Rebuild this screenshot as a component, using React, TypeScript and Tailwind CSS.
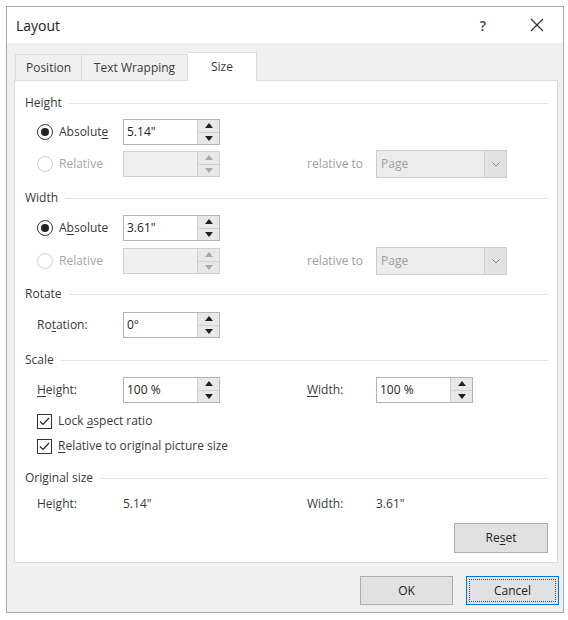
import React from 'react';

// ── Small building blocks ─────────────────────────────────────
const FONT = 'font-["Open_Sans","Noto_Sans",sans-serif]';

function U({ children }: { children: React.ReactNode }) {
  return <span className="underline underline-offset-2">{children}</span>;
}

function SectionHeader({ title, className = '' }: { title: string; className?: string }) {
  return (
    <div className={`flex h-5 items-center pl-[10px] pr-[9px] ${className}`}>
      <span className="text-[12px] text-[#3a3a3a]">{title}</span>
      <div className="ml-[7px] h-px flex-1 bg-[#e3e3e3]" />
    </div>
  );
}

function Spinner({ disabled = false }: { disabled?: boolean }) {
  const fill = disabled ? '#a8a8a8' : '#202020';
  return (
    <div className="flex h-[24px] w-[22px] flex-col border-l border-[#d0d0d0] bg-[#e8e8e8]">
      <div className="flex flex-1 items-center justify-center border-b border-[#d0d0d0]">
        <svg width="8" height="5" viewBox="0 0 8 5">
          <polygon points="0,5 8,5 4,0" fill={fill} />
        </svg>
      </div>
      <div className="flex flex-1 items-center justify-center">
        <svg width="8" height="5" viewBox="0 0 8 5">
          <polygon points="0,0 8,0 4,5" fill={fill} />
        </svg>
      </div>
    </div>
  );
}

function SpinBox({ value = '', disabled = false }: { value?: string; disabled?: boolean }) {
  return (
    <div
      className={`flex h-[26px] w-[97px] items-center border ${
        disabled ? 'border-[#cfcfcf] bg-[#f0f0f0]' : 'border-[#b4b4b4] bg-white'
      }`}
    >
      <span className="flex-1 pl-[3px] text-[12px] text-[#222]">{value}</span>
      <Spinner disabled={disabled} />
    </div>
  );
}

function Radio({ checked = false, disabled = false }: { checked?: boolean; disabled?: boolean }) {
  return (
    <span
      className={`flex h-[16px] w-[16px] items-center justify-center rounded-full border bg-white ${
        disabled ? 'border-[#cfcfcf]' : 'border-[#333]'
      }`}
    >
      {checked && <span className="h-[8px] w-[8px] rounded-full bg-[#222]" />}
    </span>
  );
}

function Checkbox() {
  return (
    <span className="flex h-[15px] w-[15px] items-center justify-center border border-[#333] bg-white">
      <svg width="11" height="9" viewBox="0 0 11 9">
        <polyline points="1,4.5 4,7.5 10,1" fill="none" stroke="#222" strokeWidth="1.2" />
      </svg>
    </span>
  );
}

function Select() {
  return (
    <div className="flex h-[28px] w-[131px] items-center border border-[#cccccc] bg-[#ececec]">
      <span className="flex-1 pl-[4px] text-[12px] text-[#a0a0a0]">Page</span>
      <div className="flex h-full w-[22px] items-center justify-center border-l border-[#d2d2d2] bg-[#e2e2e2]">
        <svg width="8" height="5" viewBox="0 0 8 5">
          <polyline points="0.5,0.5 4,4 7.5,0.5" fill="none" stroke="#8a8a8a" strokeWidth="1" />
        </svg>
      </div>
    </div>
  );
}

function RadioRow({
  label,
  checked,
  disabled,
  value,
  className = '',
  relativeTo = false,
}: {
  label: React.ReactNode;
  checked?: boolean;
  disabled?: boolean;
  value?: string;
  className?: string;
  relativeTo?: boolean;
}) {
  return (
    <div className={`flex h-[26px] items-center pl-[22px] ${className}`}>
      <div className="flex w-[86px] items-center gap-[6px]">
        <Radio checked={checked} disabled={disabled} />
        <span className={`text-[12px] ${disabled ? 'text-[#a6a6a6]' : 'text-[#3a3a3a]'}`}>{label}</span>
      </div>
      <SpinBox value={value} disabled={disabled} />
      {relativeTo && (
        <>
          <span className="ml-[87px] w-[69px] text-[12px] text-[#a0a0a0]">relative to</span>
          <Select />
        </>
      )}
    </div>
  );
}

function Button({ children, className = '', focused = false }: { children: React.ReactNode; className?: string; focused?: boolean }) {
  return (
    <button
      type="button"
      className={`flex h-[29px] w-[93px] items-center justify-center bg-[#e1e1e1] text-[12px] text-[#222] ${
        focused ? 'border border-[#0078d7] p-[2px]' : 'border border-[#adadad]'
      } ${className}`}
    >
      {focused ? (
        <span className="flex h-full w-full items-center justify-center border border-dotted border-[#444]">{children}</span>
      ) : (
        children
      )}
    </button>
  );
}

// ── Dialog ────────────────────────────────────────────────────
export default function App() {
  return (
    <div className={`h-[620px] w-[568px] bg-white pl-[6px] pt-[6px] ${FONT}`}>
      <div className="flex h-[607px] w-[558px] flex-col border border-[#a8a8a8] bg-[#f0f0f0]">
        {/* Title bar */}
        <div className="flex h-[36px] items-center bg-white pl-[9px]">
          <span className="flex-1 text-[14px] text-[#222]">Layout</span>
          <span className="mr-[44px] text-[14px] font-semibold text-[#444]">?</span>
          <svg className="mr-[19px]" width="14" height="14" viewBox="0 0 14 14">
            <path d="M1 1 L13 13 M13 1 L1 13" stroke="#333" strokeWidth="1.2" />
          </svg>
        </div>

        {/* Tabs */}
        <div className="mt-[9px] flex h-[28px] items-end pl-[8px]">
          <div className="flex h-[26px] w-[67px] items-center justify-center border border-b-0 border-[#dcdcdc] bg-[#f0f0f0] text-[12px] text-[#3a3a3a]">
            Position
          </div>
          <div className="flex h-[26px] w-[106px] items-center justify-center border border-b-0 border-l-0 border-[#dcdcdc] bg-[#f0f0f0] text-[12px] text-[#3a3a3a]">
            Text Wrapping
          </div>
          <div className="relative z-10 -mb-px flex h-[29px] w-[69px] items-center justify-center border border-b-0 border-l-0 border-[#dcdcdc] bg-white pb-px text-[12px] text-[#3a3a3a]">
            Size
          </div>
        </div>

        {/* Panel */}
        <div className="ml-[7px] mr-[5px] flex h-[483px] flex-col border border-[#dcdcdc] bg-white pt-[12px]">
          <SectionHeader title="Height" />
          <RadioRow className="mt-[6px]" checked value={'5.14"'} label={<>Absolut<U>e</U></>} />
          <RadioRow className="mt-[6px]" disabled label="Relative" relativeTo />

          <SectionHeader title="Width" className="mt-[11px]" />
          <RadioRow className="mt-[7px]" checked value={'3.61"'} label={<>A<U>b</U>solute</>} />
          <RadioRow className="mt-[7px]" disabled label="Relative" relativeTo />

          <SectionHeader title="Rotate" className="mt-[10px]" />
          <div className="mt-[8px] flex h-[26px] items-center pl-[22px]">
            <span className="w-[86px] text-[12px] text-[#3a3a3a]">
              Ro<U>t</U>ation:
            </span>
            <SpinBox value="0°" />
          </div>

          <SectionHeader title="Scale" className="mt-[12px]" />
          <div className="mt-[7px] flex h-[26px] items-center pl-[22px]">
            <span className="w-[86px] text-[12px] text-[#3a3a3a]">
              <U>H</U>eight:
            </span>
            <SpinBox value="100 %" />
            <span className="ml-[87px] w-[69px] text-[12px] text-[#3a3a3a]">
              <U>W</U>idth:
            </span>
            <SpinBox value="100 %" />
          </div>
          <div className="mt-[8px] flex h-[20px] items-center gap-[6px] pl-[22px]">
            <Checkbox />
            <span className="text-[12px] text-[#3a3a3a]">
              Lock <U>a</U>spect ratio
            </span>
          </div>
          <div className="mt-[5px] flex h-[20px] items-center gap-[6px] pl-[22px]">
            <Checkbox />
            <span className="text-[12px] text-[#3a3a3a]">
              <U>R</U>elative to original picture size
            </span>
          </div>

          <SectionHeader title="Original size" className="mt-[12px]" />
          <div className="mt-[6px] flex h-[20px] items-center pl-[22px] text-[12px] text-[#3a3a3a]">
            <span className="w-[86px]">Height:</span>
            <span className="w-[97px]">5.14"</span>
            <span className="ml-[87px] w-[69px]">Width:</span>
            <span>3.61"</span>
          </div>
          <div className="mt-[9px] flex justify-end pr-[9px]">
            <Button className="h-[30px] w-[94px]">
              Re<U>s</U>et
            </Button>
          </div>
        </div>

        {/* Footer buttons */}
        <div className="mt-[13px] flex justify-end gap-[13px] pr-[4px]">
          <Button>OK</Button>
          <Button focused>Cancel</Button>
        </div>
      </div>
    </div>
  );
}
